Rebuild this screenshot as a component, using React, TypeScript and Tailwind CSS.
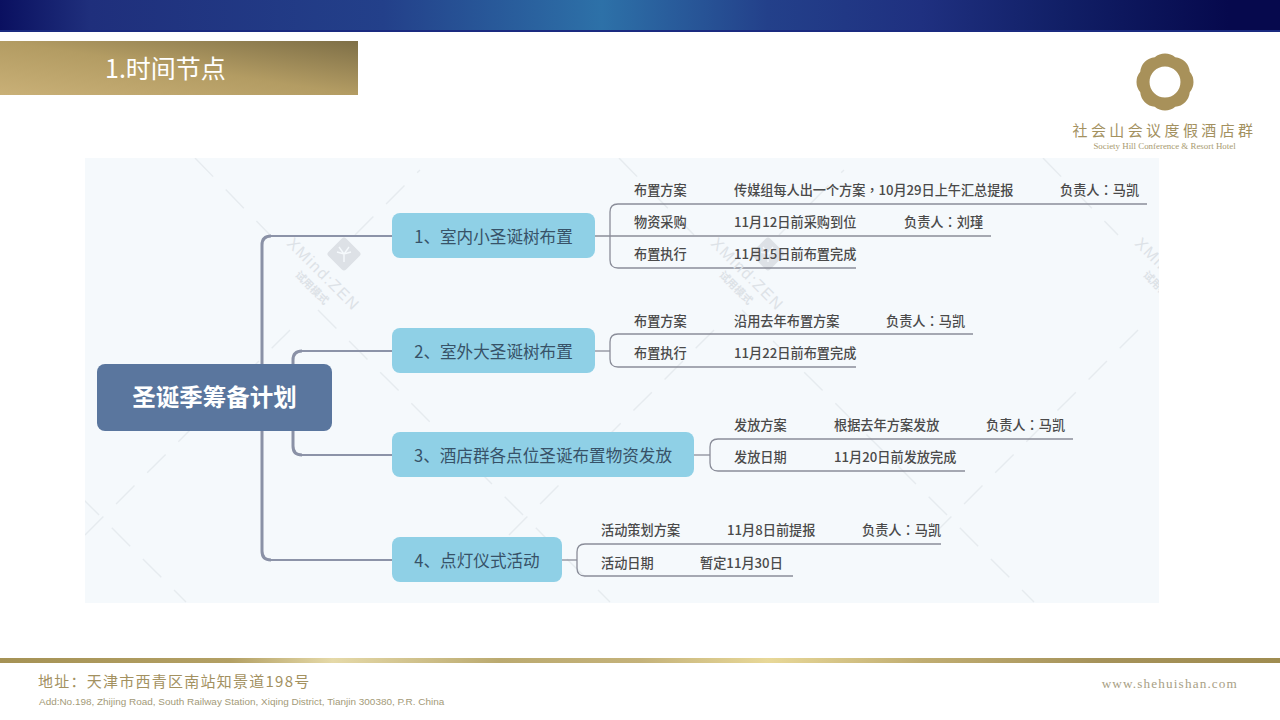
import type { ReactNode } from "react";

const dashes: [number, number, number, number][] = [
  [195, 158, 270, 235], [619, 158, 694, 235], [1043, 158, 1118, 235],
  [-106, 310, 186, 602], [318, 310, 610, 602], [742, 310, 1034, 602],
  [85, 535, 300, 320], [509, 535, 724, 320], [933, 535, 1148, 320],
  [355, 235, 420, 170], [779, 235, 844, 170],
];

function Watermark({ className }: { className: string }) {
  return (
    <div className={`absolute w-[110px] h-[110px] rotate-45 text-[#dde2e7] ${className}`}>
      <div className="absolute left-[0px] top-[36px] font-['Liberation_Sans',sans-serif] text-[16px] leading-[20px] tracking-[1.5px] whitespace-nowrap">XMind:ZEN</div>
      <div className="absolute left-[28px] top-[57px] font-['Noto_Sans_CJK_SC',sans-serif] text-[10.5px] leading-[12px] font-bold whitespace-nowrap">试用模式</div>
    </div>
  );
}

function P({ children }: { children: ReactNode }) {
  return <span className="font-['Noto_Sans_CJK_TC',sans-serif]">{children}</span>;
}

const branches = [
  { c: "top-[55px] w-[203px]", t: "1、室内小圣诞树布置" },
  { c: "top-[170px] w-[203px]", t: "2、室外大圣诞树布置" },
  { c: "top-[274px] w-[302px]", t: "3、酒店群各点位圣诞布置物资发放" },
  { c: "top-[379px] w-[170px]", t: "4、点灯仪式活动" },
];

const labels: { c: string; t: ReactNode }[] = [
  { c: "left-[549px] top-[22px]", t: "布置方案" },
  { c: "left-[649px] top-[22px] tracking-[-0.05px]", t: <>传媒组每人出一个方案<P>，</P>10月29日上午汇总提报</> },
  { c: "left-[975px] top-[22px]", t: <>负责人<P>：</P>马凯</> },
  { c: "left-[549px] top-[54px]", t: "物资采购" },
  { c: "left-[649px] top-[54px]", t: "11月12日前采购到位" },
  { c: "left-[819px] top-[54px]", t: <>负责人<P>：</P>刘瑾</> },
  { c: "left-[549px] top-[86px]", t: "布置执行" },
  { c: "left-[649px] top-[86px]", t: "11月15日前布置完成" },
  { c: "left-[549px] top-[153px]", t: "布置方案" },
  { c: "left-[649px] top-[153px]", t: "沿用去年布置方案" },
  { c: "left-[801px] top-[153px]", t: <>负责人<P>：</P>马凯</> },
  { c: "left-[549px] top-[185px]", t: "布置执行" },
  { c: "left-[649px] top-[185px]", t: "11月22日前布置完成" },
  { c: "left-[649px] top-[257px]", t: "发放方案" },
  { c: "left-[749px] top-[257px]", t: "根据去年方案发放" },
  { c: "left-[901px] top-[257px]", t: <>负责人<P>：</P>马凯</> },
  { c: "left-[649px] top-[289px]", t: "发放日期" },
  { c: "left-[749px] top-[289px]", t: "11月20日前发放完成" },
  { c: "left-[516px] top-[362px]", t: "活动策划方案" },
  { c: "left-[642px] top-[362px]", t: "11月8日前提报" },
  { c: "left-[777px] top-[362px]", t: <>负责人<P>：</P>马凯</> },
  { c: "left-[516px] top-[395px]", t: "活动日期" },
  { c: "left-[615px] top-[395px]", t: "暂定11月30日" },
];

export default function App() {
  return (
    <div className="relative w-[1280px] h-[720px] overflow-hidden bg-white font-['Noto_Sans_CJK_SC',sans-serif]">
      <div className="h-[32px] border-b-2 border-[#1a2a80] bg-[linear-gradient(90deg,#0a1060_0%,#1f2f7c_7%,#23408a_30%,#2d71a8_47%,#23408a_60%,#1f3080_72%,#111f66_83%,#06094d_96%,#06094d_100%)]" />

      <div className="flex justify-between h-[126px]">
        <div className="mt-[9px] w-[358px] h-[54px] pl-[105px] pb-[3px] flex items-center bg-[linear-gradient(to_top_right,#c9b077_0%,#b39c63_50%,#7e6f47_100%)]">
          <span className="text-[25px] leading-[30px] text-white">1.时间节点</span>
        </div>
        <div className="w-[181px] mr-[25px] mt-[21px] flex flex-col items-center">
          <svg width="58" height="58" viewBox="0 0 60 60">
            <path
              fillRule="evenodd"
              fill="#a8915a"
              d="M40.6 4.4 A16.4 16.4 0 0 1 55.6 19.4 A16.4 16.4 0 0 1 55.6 40.6 A16.4 16.4 0 0 1 40.6 55.6 A16.4 16.4 0 0 1 19.4 55.6 A16.4 16.4 0 0 1 4.4 40.6 A16.4 16.4 0 0 1 4.4 19.4 A16.4 16.4 0 0 1 19.4 4.4 A16.4 16.4 0 0 1 40.6 4.4 Z M30 14 A16 16 0 1 0 30 46 A16 16 0 1 0 30 14 Z"
            />
          </svg>
          <div className="mt-[9px] text-[15px] leading-[20px] tracking-[3.4px] whitespace-nowrap text-[#a3915f]">社会山会议度假酒店群</div>
          <div className="font-['Liberation_Serif',serif] text-[8.9px] leading-[12px] whitespace-nowrap text-[#a89a70]">Society Hill Conference &amp; Resort Hotel</div>
        </div>
      </div>

      <div className="relative ml-[85px] w-[1074px] h-[445px] overflow-hidden bg-[#f5f9fc]">
        <svg className="absolute inset-0" width="1074" height="445" viewBox="85 158 1074 445" fill="none">
          <g stroke="#e6ebef" strokeWidth="1.4" strokeDasharray="26 18">
            {dashes.map(([a, b, c, d], i) => (
              <line key={i} x1={a} y1={b} x2={c} y2={d} />
            ))}
          </g>
          {[344, 768, 1192].map((x) => (
            <g key={x} transform={`translate(${x} 254) rotate(45)`}>
              <rect x="-12.5" y="-12.5" width="25" height="25" rx="3" fill="#dde1e6" />
              <path d="M-7 -2 L0 0 L7 -2 M0 0 L0 8 M0 0 L-5 -7 M0 0 L5 -7" stroke="#f5f9fc" strokeWidth="1.4" transform="rotate(-45)" />
            </g>
          ))}
          <g stroke="#8c93a8" strokeWidth="2.2">
            <path d="M392 236 H271" />
            <path d="M392 560 H271" />
            <path d="M392 351 H302" />
            <path d="M392 455 H302" />
          </g>
          <g stroke="#8a91a6" strokeWidth="3">
            <path d="M271 236 Q262 236 262 245 V551 Q262 560 271 560" />
            <path d="M302 351 Q293 351 293 360 V446 Q293 455 302 455" />
          </g>
          <g stroke="#8a8d99" strokeWidth="1.3">
            <path d="M595 236 H991" />
            <path d="M1147 204 H618 Q610 204 610 212 V260 Q610 268 618 268 H856" />
            <path d="M595 351 H610" />
            <path d="M973 334 H618 Q610 334 610 342 V359 Q610 367 618 367 H856" />
            <path d="M694 455 H710" />
            <path d="M1073 439 H718 Q710 439 710 447 V463 Q710 471 718 471 H965" />
            <path d="M562 560 H577" />
            <path d="M941 544 H585 Q577 544 577 552 V568 Q577 576 585 576 H793" />
          </g>
        </svg>

        <Watermark className="left-[182px] top-[73px]" />
        <Watermark className="left-[606px] top-[73px]" />
        <Watermark className="left-[1030px] top-[73px]" />

        <div className="absolute left-[12px] top-[206px] w-[235px] h-[67px] pb-[3px] rounded-[8px] bg-[#5a769e] flex items-center justify-center">
          <span className="text-[23.5px] leading-[30px] font-bold text-white">圣诞季筹备计划</span>
        </div>

        {branches.map((b) => (
          <div key={b.c} className={`absolute left-[307px] h-[45px] rounded-[8px] bg-[#8fd0e6] flex items-center justify-center whitespace-nowrap text-[16.6px] leading-[24px] text-[#375268] ${b.c}`}>
            {b.t}
          </div>
        ))}

        {labels.map((l) => (
          <div key={l.c} className={`absolute h-[20px] text-[13.2px] leading-[20px] font-medium whitespace-nowrap text-[#4a4a4a] ${l.c}`}>
            {l.t}
          </div>
        ))}
      </div>

      <div className="mt-[55px] h-[5px] bg-[linear-gradient(90deg,#a59255_0%,#b3a064_18%,#e5d9a8_26%,#bbaa70_39%,#c4b27a_50%,#e8d898_60%,#c0ad72_72%,#a5925a_86%,#9f8c50_100%)]" />

      <div className="flex justify-between pl-[38px] pr-[42px]">
        <div className="flex flex-col">
          <div className="mt-[8px] text-[15px] leading-[20px] tracking-[1.25px] text-[#a3915f] whitespace-nowrap">地址：天津市西青区南站知景道198号</div>
          <div className="mt-[4px] ml-[1px] font-['Liberation_Sans',sans-serif] text-[9.95px] leading-[14px] text-[#a39a78] whitespace-nowrap">Add:No.198, Zhijing Road, South Railway Station, Xiqing District, Tianjin 300380, P.R. China</div>
        </div>
        <div className="mt-[12px] font-['Liberation_Serif',serif] text-[13.2px] leading-[18px] tracking-[1.15px] text-[#a8a085] whitespace-nowrap">www.shehuishan.com</div>
      </div>
    </div>
  );
}
